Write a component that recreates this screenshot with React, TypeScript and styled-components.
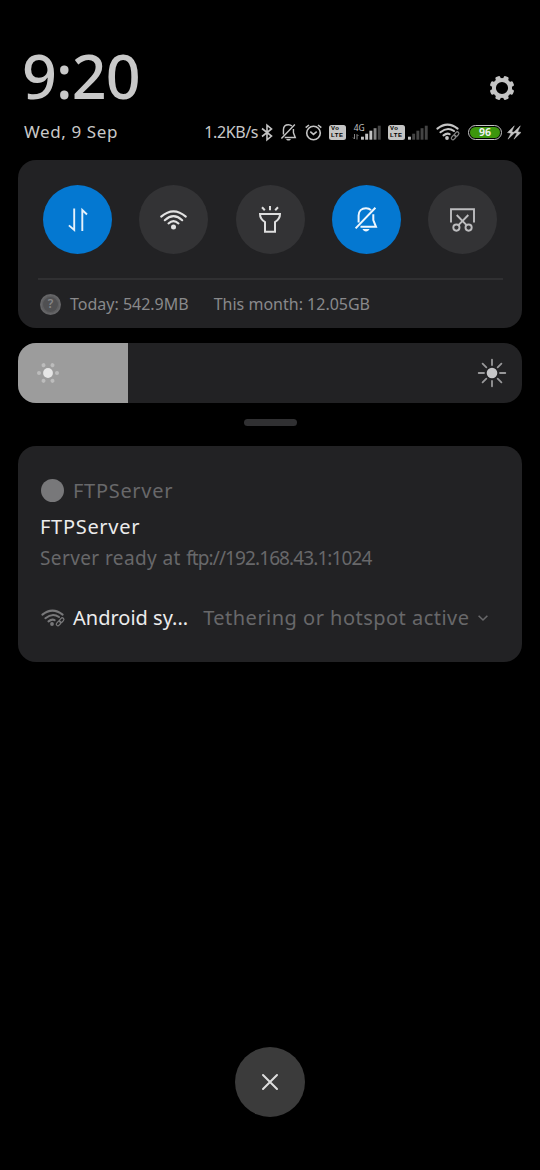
import React from "react";
import styled, { createGlobalStyle } from "styled-components";

const GlobalStyle = createGlobalStyle`
  * { box-sizing: border-box; }
  body { margin: 0; background: #000; }
`;

const Screen = styled.main`
  width: 540px;
  height: 1170px;
  overflow: hidden;
  padding: 0 18px;
  display: flex;
  flex-direction: column;
  background: #000;
  color: #c9c9c9;
  font-family: "Noto Sans", "Open Sans", sans-serif;
  svg { display: block; flex: none; overflow: visible; fill: none; }
`;

const Text = styled.span<{ $size: number; $color?: string; $track?: number; $weight?: number; $gap?: number }>`
  font-size: ${(p) => p.$size}px;
  color: ${(p) => p.$color ?? "inherit"};
  letter-spacing: ${(p) => p.$track ?? 0}px;
  font-weight: ${(p) => p.$weight ?? 400};
  margin-left: ${(p) => p.$gap ?? 0}px;
  line-height: 24px;
  white-space: pre;
`;

const ClockRow = styled.header`
  height: 112px;
  padding: 44px 7px 0 4px;
  display: flex;
  justify-content: space-between;
`;

const Clock = styled.time`
  font-size: 61px;
  font-weight: 500;
  line-height: 64px;
  letter-spacing: -0.9px;
`;

const GearButton = styled.button`
  width: 26px;
  height: 26px;
  margin-top: 31px;
  padding: 0;
  border: 0;
  background: none;
`;

const StatusRow = styled.div`
  height: 48px;
  padding: 8px 0 16px 6px;
  display: flex;
  align-items: center;
`;

const DateSlot = styled.div`
  display: flex;
  width: 181px;
`;

const SpeedSlot = styled.div`
  display: flex;
  width: 56px;
`;

const StatusIcon = styled.svg<{ $gap?: number }>`
  margin-left: ${(p) => p.$gap ?? 0}px;
`;

const Volte = styled.div<{ $gap: number }>`
  flex: none;
  width: 17px;
  height: 15px;
  margin-left: ${(p) => p.$gap}px;
  padding: 0.5px 2px;
  border-radius: 2.5px;
  background: #c4c4c4;
  color: #000;
  font-family: "Liberation Sans", sans-serif;
  font-size: 6px;
  font-weight: 700;
  letter-spacing: 0.6px;
`;

const VolteLine = styled.div`
  height: 7px;
  line-height: 7px;
`;

const Battery = styled.div`
  flex: none;
  width: 34px;
  height: 15px;
  margin-left: 8px;
  border: 1.7px solid #c4c4c4;
  border-radius: 8px;
  padding: 1px;
  display: flex;
`;

const BatteryLevel = styled.div`
  flex: 1;
  border-radius: 6px;
  background: #3c960d;
  color: #eee;
  font-size: 10.5px;
  font-weight: 700;
  line-height: 11px;
  text-align: center;
`;

const Card = styled.section`
  flex: none;
  border-radius: 18px;
  background: #222224;
`;

const QuickPanel = styled(Card)`
  height: 168px;
  padding: 25px 19px 0 20px;
`;

const Tiles = styled.div`
  display: flex;
  justify-content: space-between;
  padding: 0 6px 0 5px;
`;

const Tile = styled.button<{ $on?: boolean }>`
  width: 69px;
  height: 69px;
  padding: 0;
  border: 0;
  border-radius: 50%;
  display: grid;
  place-items: center;
  background: ${(p) => (p.$on ? "#0478d1" : "#333335")};
`;

const Usage = styled.div`
  height: 50px;
  margin-top: 24px;
  padding-left: 2px;
  border-top: 2px solid #303032;
  display: flex;
  align-items: center;
`;

const Help = styled.div`
  width: 21px;
  height: 21px;
  margin-right: 9px;
  border-radius: 50%;
  border: 2px solid #656567;
  background: #505052;
  box-shadow: inset 0 0 0 1px #5f5f61;
  display: grid;
  place-items: center;
  font-size: 12px;
  font-weight: 600;
  line-height: 12px;
  color: #858587;
`;

const Brightness = styled(Card)`
  height: 60px;
  margin-top: 14.5px;
  overflow: hidden;
  display: flex;
  align-items: center;
  justify-content: space-between;
  padding-right: 16px;
`;

const BrightnessLevel = styled.div`
  width: 109.5px;
  height: 60px;
  padding-left: 18px;
  display: flex;
  align-items: center;
  background: #9c9c9c;
`;

const Handle = styled.div`
  flex: none;
  width: 53px;
  height: 7px;
  margin: 16.5px auto 19.5px;
  border-radius: 4px;
  background: #303032;
`;

const Notifications = styled(Card)`
  height: 216px;
  padding: 33px 22px 0;
`;

const NotificationLine = styled.div<{ $height: number }>`
  height: ${(p) => p.$height}px;
  display: flex;
  align-items: center;
`;

const AppDot = styled.div`
  width: 23px;
  height: 23px;
  margin-left: 1px;
  border-radius: 50%;
  background: #78787a;
`;

const CloseButton = styled.button`
  flex: none;
  width: 70px;
  height: 70px;
  margin: 385.5px auto 0;
  padding: 0;
  border: 0;
  border-radius: 50%;
  display: grid;
  place-items: center;
  background: #3b3b3b;
`;

const ink = "#c4c4c4";

const Gear = () => {
  const teeth = [22.5, 67.5, 112.5, 157.5, 202.5, 247.5, 292.5, 337.5];
  return (
    <svg width="26" height="26" viewBox="-13 -13 26 26">
      <circle r="8.1" stroke={ink} strokeWidth="4" />
      {teeth.map((a) => (
        <rect key={a} x="-2.6" y="-12.3" width="5.2" height="5" rx="1.5" fill={ink} transform={`rotate(${a})`} />
      ))}
    </svg>
  );
};

const BellOff = ({ height, color, width, gap }: { height: number; color: string; width: number; gap?: number }) => (
  <StatusIcon $gap={gap} width={(height * 22) / 25} height={height} viewBox="0 0 22 25" stroke={color} strokeWidth={width}>
    <path d="M3.6 15.5V8.6C3.6 4 6.6 1.2 11 1.2C13 1.2 14.8 1.9 16 3.1M18.3 7.2V13L21 19.8H5.5M.6 21.4L20.4 .8" />
    <path d="M7.5 22h7c-.6 1.7-1.9 2.4-3.5 2.4s-2.9-.7-3.5-2.4z" fill={color} stroke="none" />
  </StatusIcon>
);

const Hotspot = ({ color, gap, link = color }: { color: string; gap?: number; link?: string }) => (
  <StatusIcon $gap={gap} width="24" height="18" viewBox="0 0 24 18" stroke={color} strokeWidth="2.1" strokeLinecap="round">
    <path d="M1.4 5.6Q11.5 -2.4 21.6 5.6M4.4 9.2Q11.5 3.4 18 8M7.5 12.4Q11 9.5 13.6 11.2" />
    <circle cx="11" cy="15" r="1.9" fill={color} stroke="none" />
    <g stroke={link} strokeWidth="1.2">
      <rect x="-1.6" y="-2.6" width="3.2" height="5.2" rx="1.6" transform="translate(20.6 11.2) rotate(42)" />
      <rect x="-1.6" y="-2.6" width="3.2" height="5.2" rx="1.6" transform="translate(17.6 14.4) rotate(42)" />
    </g>
  </StatusIcon>
);

const Signal = ({ level, gap, network }: { level: number; gap: number; network?: boolean }) => (
  <StatusIcon $gap={gap} width={network ? 28 : 20} height="17" viewBox={network ? "-8 0 28 17" : "0 0 20 17"}>
    {[3, 6, 9, 11.5, 14].map((h, i) => (
      <rect key={h} x={i * 4.2} y={15.7 - h} width="2.9" height={h} fill={i < level ? ink : i === 3 && network ? "#858585" : "#444"} />
    ))}
    {network && (
      <>
        <text x="-7.2" y="6.6" fontSize="8.4" fill={ink}>4G</text>
        <path d="M-6.5 10v5l-1.5-1.5M-4 15.5v-5l1.5 1.5" stroke="#858585" strokeWidth="1" />
      </>
    )}
  </StatusIcon>
);

const VolteBadge = ({ gap }: { gap: number }) => (
  <Volte $gap={gap}>
    <VolteLine>Vo</VolteLine>
    <VolteLine>LTE</VolteLine>
  </Volte>
);

const StatusIcons = () => (
  <>
    <StatusIcon $gap={1} width="12" height="17" viewBox="0 0 12 17" stroke={ink} strokeWidth="1.6">
      <path d="M1 4.5L10.5 12L6 15.8V1.2L10.5 5L1 12.5" />
    </StatusIcon>
    <BellOff height={17} color={ink} width={2.1} gap={8} />
    <StatusIcon $gap={8.5} width="17" height="17" viewBox="0 0 17 17" stroke={ink} strokeWidth="1.6">
      <circle cx="8.5" cy="9" r="6.8" />
      <path d="M5.3 7.6L8.5 10.4L11.7 7.6M.7 3.7L4 1M16.3 3.7L13 1" />
    </StatusIcon>
    <VolteBadge gap={7.5} />
    <Signal gap={7} level={3} network />
    <VolteBadge gap={7} />
    <Signal gap={3} level={1} />
    <Hotspot color={ink} gap={8} link="#858585" />
    <Battery><BatteryLevel>96</BatteryLevel></Battery>
    <StatusIcon $gap={5} width="15" height="15" viewBox="0 0 15 15">
      <path
        fill={ink}
        stroke={ink}
        strokeWidth=".5"
        d="M7.3 .8L.5 7.6L4 8.2L1 14.2L8 7.4L4.7 6.8ZM13.3 .8L6.5 7.6L10 8.2L7 14.2L14 7.4L10.7 6.8Z"
      />
    </StatusIcon>
  </>
);

const DataIcon = () => (
  <svg width="20" height="24" viewBox="0 0 20 24" stroke="#e5f1fb" strokeWidth="1.9">
    <path d="M6.2 .5V22L.9 17.4M14.3 23V2L19 6.5" />
  </svg>
);

const WifiIcon = () => (
  <svg width="27" height="20" viewBox="0 0 27 20" stroke="#e2e2e2" strokeWidth="2.1" strokeLinecap="round">
    <path d="M1.2 6.6Q13.5 -4 25.8 6.6M4.8 10.2Q13.5 2.2 22.2 10.2M8.5 13.4Q13.5 8.7 18.5 13.4" />
    <circle cx="13.5" cy="17.1" r="2.5" fill="#e2e2e2" stroke="none" />
  </svg>
);

const TorchIcon = () => (
  <svg width="22" height="27" viewBox="0 0 22 27" stroke="#dedede" strokeWidth="2">
    <path d="M1 8H21C21 12 18.5 14.5 16 16V25.7H6V16C3.5 14.5 1 12 1 8ZM11 0V4.3M3 1.2L5.8 4.2M19 1.2L16.2 4.2" />
  </svg>
);

const CutIcon = () => (
  <svg width="25" height="24" viewBox="0 0 25 24" stroke="#bdbdbf" strokeWidth="1.9">
    <path d="M1 14.5V1.3H24V14.5M6.7 7L17 17.7M18.3 7L8 17.7" />
    <circle cx="6.4" cy="19.6" r="3.1" />
    <circle cx="18.6" cy="19.6" r="3.1" />
  </svg>
);

const DimIcon = () => (
  <svg width="24" height="24" viewBox="-12 -12 24 24">
    <circle r="4.9" fill="#e6e6e6" />
    {[0, 60, 120, 180, 240, 300].map((a) => (
      <circle key={a} cx="9" r="2" fill="#bcbcbc" transform={`rotate(${a})`} />
    ))}
  </svg>
);

const BrightIcon = () => (
  <svg width="28" height="28" viewBox="-14 -14 28 28">
    <circle r="5.3" fill="#c6c6c8" />
    {[0, 45, 90, 135, 180, 225, 270, 315].map((a) => (
      <path key={a} d="M8 0H13.3" stroke="#98989a" strokeWidth="1.8" strokeLinecap="round" transform={`rotate(${a})`} />
    ))}
  </svg>
);

export default function App() {
  return (
    <Screen>
      <GlobalStyle />
      <ClockRow>
        <Clock>9:20</Clock>
        <GearButton aria-label="Settings"><Gear /></GearButton>
      </ClockRow>
      <StatusRow>
        <DateSlot><Text $size={17} $track={0.6}>Wed, 9 Sep</Text></DateSlot>
        <SpeedSlot><Text $size={16} $track={-0.4}>1.2KB/s</Text></SpeedSlot>
        <StatusIcons />
      </StatusRow>
      <QuickPanel>
        <Tiles>
          <Tile $on aria-label="Mobile data"><DataIcon /></Tile>
          <Tile aria-label="Wi-Fi"><WifiIcon /></Tile>
          <Tile aria-label="Torch"><TorchIcon /></Tile>
          <Tile $on aria-label="Silent"><BellOff height={25} color="#eef6fd" width={2} /></Tile>
          <Tile aria-label="Screenshot"><CutIcon /></Tile>
        </Tiles>
        <Usage>
          <Help>?</Help>
          <Text $size={16} $color="#89898b">Today: 542.9MB</Text>
          <Text $size={16} $color="#89898b" $gap={25}>This month: 12.05GB</Text>
        </Usage>
      </QuickPanel>
      <Brightness>
        <BrightnessLevel><DimIcon /></BrightnessLevel>
        <BrightIcon />
      </Brightness>
      <Handle />
      <Notifications>
        <NotificationLine $height={24}>
          <AppDot />
          <Text $size={20} $color="#68686a" $gap={9} $track={0.7}>FTPServer</Text>
        </NotificationLine>
        <NotificationLine $height={48}>
          <Text $size={20} $color="#ececec" $track={0.7}>FTPServer</Text>
        </NotificationLine>
        <NotificationLine $height={14}>
          <Text $size={19} $color="#68686a" $track={0.4}>
            {"Server ready at "}
            <Text $size={19} $track={-0.9}>ftp://192.168.43.1:1024</Text>
          </Text>
        </NotificationLine>
        <NotificationLine $height={106}>
          <Hotspot color="#78787a" gap={1} />
          <Text $size={20} $color="#ececec" $gap={8}>Android sy...</Text>
          <Text $size={20} $color="#68686a" $gap={15} $track={0.48}>Tethering or hotspot active</Text>
          <StatusIcon $gap={8} width="10" height="6" viewBox="0 0 10 6" stroke="#68686a" strokeWidth="1.6">
            <path d="M.6 .7L5 5L9.4 .7" />
          </StatusIcon>
        </NotificationLine>
      </Notifications>
      <CloseButton aria-label="Close">
        <svg width="16" height="16" viewBox="0 0 16 16" stroke="#dedede" strokeWidth="2" strokeLinecap="round">
          <path d="M1 1L15 15M15 1L1 15" />
        </svg>
      </CloseButton>
    </Screen>
  );
}
